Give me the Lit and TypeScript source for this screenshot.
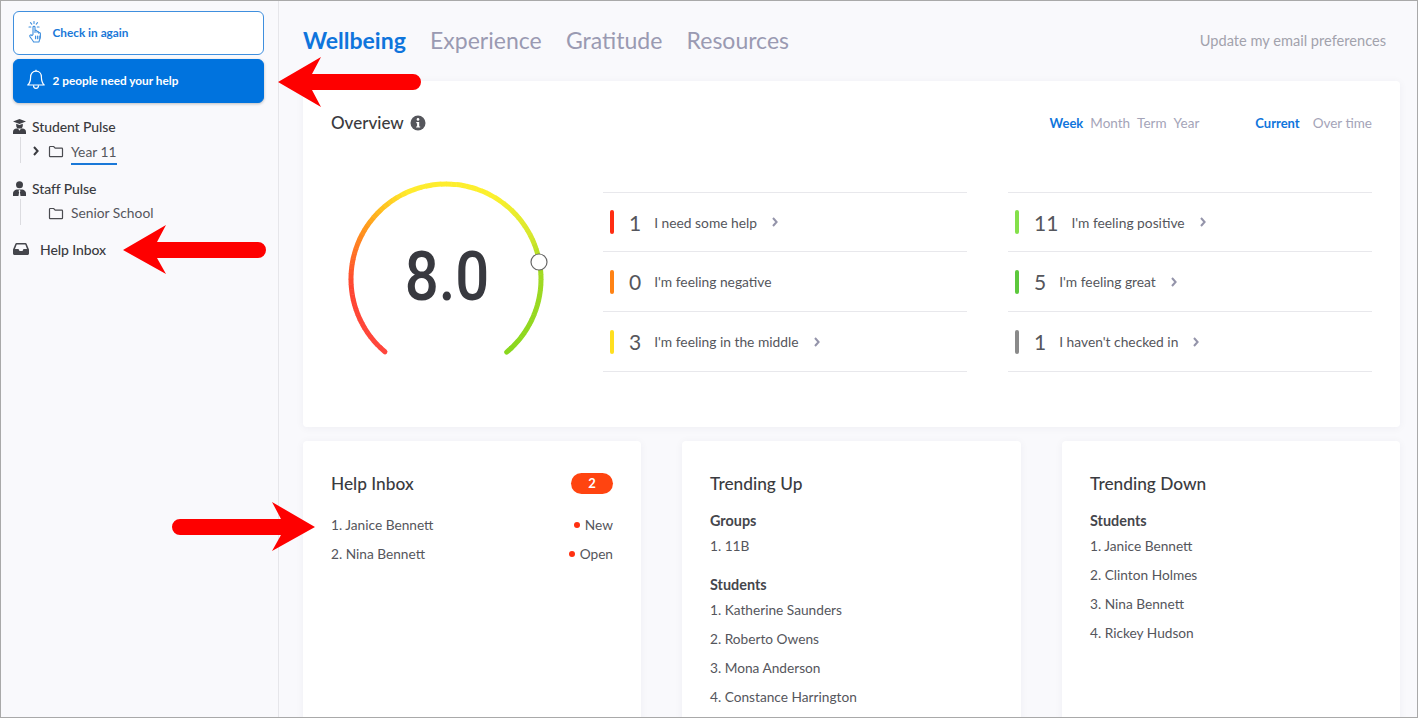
import { LitElement, html, css, svg } from 'lit';
import { customElement } from 'lit/decorators.js';

// gradient stops along the gauge, 0 = lower left end, 1 = lower right end
const GAUGE_STOPS: [number, number[]][] = [
  [0, [255, 70, 60]],
  [0.16, [255, 70, 50]],
  [0.27, [255, 140, 30]],
  [0.34, [255, 190, 30]],
  [0.41, [255, 235, 45]],
  [0.6, [252, 240, 45]],
  [0.72, [215, 232, 45]],
  [0.78, [165, 218, 35]],
  [1, [135, 215, 30]],
];

function gaugeColor(t: number) {
  for (let i = 1; i < GAUGE_STOPS.length; i++) {
    const [t0, c0] = GAUGE_STOPS[i - 1];
    const [t1, c1] = GAUGE_STOPS[i];
    if (t <= t1) {
      const k = (t - t0) / (t1 - t0);
      const c = c0.map((v, n) => Math.round(v + (c1[n] - v) * k));
      return `rgb(${c.join(',')})`;
    }
  }
  return 'rgb(135,215,30)';
}

function gaugeSegments() {
  const cx = 100;
  const cy = 100;
  const r = 95;
  const start = 220;
  const sweep = 280;
  const steps = 90;
  const point = (deg: number) => {
    const a = ((deg - 90) * Math.PI) / 180;
    return [cx + r * Math.cos(a), cy + r * Math.sin(a)];
  };
  const parts = [];
  for (let i = 0; i < steps; i++) {
    const [x0, y0] = point(start + (sweep * i) / steps);
    const [x1, y1] = point(start + (sweep * (i + 1)) / steps + 0.3);
    parts.push(svg`<path d="M${x0} ${y0}A${r} ${r} 0 0 1 ${x1} ${y1}" stroke=${gaugeColor(i / steps)} stroke-width="5" fill="none" stroke-linecap=${i === 0 || i === steps - 1 ? 'round' : 'butt'}/>`);
  }
  return parts;
}

const chevron = html`<svg class="chev" viewBox="0 0 8 10"><path d="M2 1l3.600 4L2 9" fill="none" stroke="currentColor" stroke-width="2"/></svg>`;

const folder = html`<svg class="folder" viewBox="0 0 16 13"><path d="M1.500 11V2.200c0-.5.3-.7.7-.7h3.500l1.500 1.700h6.600c.4 0 .7.3.7.7V11c0 .4-.3.7-.7.7H2.200c-.4 0-.7-.3-.7-.7z" fill="none" stroke="#4a4b50" stroke-width="1.200"/></svg>`;

type Row = { n: number; label: string; color: string; more: boolean };

const LEFT: Row[] = [
  { n: 1, label: 'I need some help', color: '#ff2d12', more: true },
  { n: 0, label: "I'm feeling negative", color: '#ff8214', more: false },
  { n: 3, label: "I'm feeling in the middle", color: '#ffdf20', more: true },
];
const RIGHT: Row[] = [
  { n: 11, label: "I'm feeling positive", color: '#84e04a', more: true },
  { n: 5, label: "I'm feeling great", color: '#5cc83c', more: true },
  { n: 1, label: "I haven't checked in", color: '#8a8a8a', more: true },
];

@customElement('app-root')
export class AppRoot extends LitElement {
  static styles = css`
    :host {
      display: block;
      position: relative;
      width: 1418px;
      height: 718px;
      overflow: hidden;
      box-sizing: border-box;
      border: 1px solid #a9a9a9;
      background: #f9f9fc;
      font-family: Lato, 'Open Sans', sans-serif;
      color: #45464c;
      font-size: 14px;
    }
    .page {
      display: flex;
      height: 100%;
    }
    .side {
      width: 278px;
      flex: none;
      box-sizing: border-box;
      border-right: 1px solid #e6e6ea;
      padding: 10px 14px 0 12px;
    }
    .btn {
      height: 44px;
      box-sizing: border-box;
      border-radius: 6px;
      display: flex;
      align-items: center;
      font-size: 11.800px;
      font-weight: 700;
      border: 1.500px solid #3f8fde;
      background: #fff;
      color: #1a78d8;
      padding: 0 0 2px 13.500px;
      gap: 9px;
    }
    .btn svg {
      width: 16px;
      height: 22px;
      flex: none;
    }
    .btn.solid {
      margin-top: 4px;
      background: #0073de;
      border-color: #0073de;
      color: #fff;
      box-shadow: 0 1px 3px rgba(0, 0, 0, 0.25);
      padding-left: 12.500px;
      gap: 8px;
    }
    .btn.solid svg {
      width: 18px;
    }
    .group {
      display: flex;
      align-items: center;
      gap: 6px;
      height: 20px;
      font-size: 14px;
      letter-spacing: -0.1px;
      font-weight: 500;
      color: #3a3b40;
    }
    .group svg {
      width: 13px;
      height: 15px;
      flex: none;
    }
    .pulse {
      margin-top: 13px;
    }
    .pulse + .pulse {
      margin-top: 15px;
    }
    .tree {
      margin-left: 7px;
      border-left: 1px solid #dcdce0;
      height: 26px;
      box-sizing: border-box;
      padding-top: 2px;
      margin-top: 1px;
      display: flex;
      align-items: center;
      font-size: 13.800px;
      color: #55565c;
    }
    .tree .chev {
      width: 8px;
      height: 10px;
      margin-left: 11px;
      color: #3a3b40;
      flex: none;
    }
    .tree .folder {
      width: 16px;
      height: 13px;
      margin-left: 8px;
      flex: none;
    }
    .tree .indent {
      width: 8px;
      margin-left: 11px;
      flex: none;
    }
    .tree .name {
      margin-left: 7px;
      padding-bottom: 2px;
    }
    .tree .name.on {
      border-bottom: 2px solid #1a78d8;
      margin-top: 6px;
      padding-bottom: 3px;
    }
    .inbox-link {
      margin-top: 14px;
      display: flex;
      align-items: center;
      gap: 11px;
      font-size: 14px;
      letter-spacing: -0.1px;
      font-weight: 500;
      color: #3a3b40;
      height: 20px;
    }
    .inbox-link svg {
      width: 16px;
      height: 12px;
      flex: none;
    }
    .main {
      flex: 1;
      min-width: 0;
      padding: 0 17px 0 24px;
    }
    .top {
      height: 80px;
      box-sizing: border-box;
      padding: 0 14px 0 0;
      display: flex;
      align-items: center;
      justify-content: space-between;
    }
    .tabs {
      display: flex;
      gap: 24.300px;
      font-size: 23px;
      color: #9a9ab2;
      margin-top: -3px;
    }
    .tabs .on {
      color: #0f75dc;
      font-weight: 700;
    }
    .email {
      font-size: 14.600px;
      color: #a2a2ac;
      margin-top: -2px;
    }
    .card {
      background: #fff;
      border-radius: 4px;
      box-shadow: 0 1px 8px rgba(40, 40, 80, 0.05);
      box-sizing: border-box;
    }
    .overview {
      height: 346px;
      padding: 30px 28px 0;
    }
    .ov-head {
      display: flex;
      align-items: center;
      height: 24px;
    }
    .ov-head h2 {
      margin: -1px 0 0;
      font-size: 17px;
      font-weight: 500;
      color: #3a3b40;
    }
    .ov-head .info {
      width: 16px;
      height: 16px;
      margin-left: 6px;
    }
    .filters {
      margin-left: auto;
      display: flex;
      gap: 7px;
      font-size: 13.500px;
      color: #a4a4b8;
    }
    .filters .on {
      color: #0f75dc;
      font-weight: 700;
      font-size: 13px;
    }
    .filters.views {
      margin-left: 56px;
      gap: 13px;
    }
    .ov-body {
      display: flex;
      margin-top: 44px;
    }
    .gauge {
      position: relative;
      width: 200px;
      height: 200px;
      margin: 0 57px 0 15px;
      flex: none;
    }
    .gauge svg {
      width: 200px;
      height: 200px;
      overflow: visible;
      display: block;
    }
    .gauge .value {
      position: absolute;
      inset: 0 0 4px 2px;
      display: flex;
      align-items: center;
      justify-content: center;
      font-family: Roboto, sans-serif;
      font-size: 68px;
      color: #38393f;
      font-weight: 500;
      line-height: 1;
      transform: scaleX(0.88);
    }
    .cols {
      display: grid;
      grid-template-columns: 364px 364px;
      gap: 41px;
      height: 180px;
      margin-top: 13px;
    }
    .row {
      height: 60px;
      box-sizing: border-box;
      display: flex;
      align-items: center;
      border-top: 1px solid #e8e8ec;
    }
    .row:first-child {
      height: 59px;
    }
    .col {
      border-bottom: 1px solid #e8e8ec;
    }
    .row .bar {
      width: 4px;
      height: 24px;
      border-radius: 2px;
      margin-left: 7px;
      flex: none;
    }
    .row .n {
      margin-left: 15px;
      padding-right: 13px;
      font-size: 21px;
      color: #55565c;
      flex: none;
    }
    .row .label {
      font-size: 13.800px;
      color: #55565c;
    }
    .row .chev {
      width: 8px;
      height: 10px;
      margin-left: 14px;
      color: #9494aa;
    }
    .cards {
      display: grid;
      grid-template-columns: 338px 339px 338px;
      gap: 41px;
      margin-top: 14px;
    }
    .small {
      height: 300px;
      padding: 30px 28px 0;
    }
    .small h3 {
      margin: 0 0 16px;
      font-size: 17.300px;
      font-weight: 500;
      color: #3a3b40;
      height: 24px;
      line-height: 26px;
    }
    .small-head {
      display: flex;
      justify-content: space-between;
      align-items: center;
    }
    .small-head h3 {
      margin: 0;
    }
    .count {
      width: 42px;
      height: 21px;
      border-radius: 11px;
      background: #ff4410;
      color: #fff;
      font-size: 13px;
      font-weight: 700;
      display: flex;
      align-items: center;
      justify-content: center;
    }
    .inbox-list {
      margin-top: 15px;
    }
    .inbox-list div {
      display: flex;
      align-items: center;
      height: 29px;
      font-size: 13.700px;
      color: #55565c;
    }
    .inbox-list .dot {
      width: 6px;
      height: 6px;
      border-radius: 50%;
      background: #ff3010;
      margin-left: auto;
      margin-right: 5px;
    }
    .sub {
      font-size: 14.400px;
      font-weight: 700;
      color: #45464c;
      height: 20px;
      line-height: 20px;
    }
    .names {
      margin-bottom: 15px;
    }
    .names div {
      height: 29px;
      line-height: 29px;
      font-size: 13.700px;
      color: #55565c;
    }
    .arrows {
      position: absolute;
      left: -1px;
      top: -1px;
      width: 1418px;
      height: 718px;
      pointer-events: none;
    }
  `;

  private renderRow(r: Row) {
    return html`<div class="row">
      <span class="bar" style="background:${r.color}"></span>
      <span class="n">${r.n}</span>
      <span class="label">${r.label}</span>
      ${r.more ? chevron : ''}
    </div>`;
  }

  private renderSide() {
    return html`<aside class="side">
      <div class="btn">
        <svg viewBox="0 0 16 22" fill="none" stroke="#3f8fde" stroke-width="1.100" stroke-linecap="round" stroke-linejoin="round">
          <path d="M6 .5v2M2.500 1.700l1.200 1.500M9.500 1.700L8.300 3.200M1 6h1.800M9.300 6h1.800"/>
          <path d="M5 13.500V6.200c0-1.200 2-1.200 2 0v5.300l.1-1.500c0-1.100 1.800-1.100 1.800 0l.1 1.300c0-1 1.700-1 1.700.1v.9c.1-.9 1.700-.9 1.700.2v3.700c0 1.200-.5 2-1 3l-.4 1.800H5.600c-.6-1.400-1.800-2.800-3.400-4.900-1.400-1.800.7-3 1.800-1.500z"/>
          <path d="M7.500 15v2.800M9.400 15v2.800M11.200 15v2.800"/>
        </svg>
        Check in again
      </div>
      <div class="btn solid">
        <svg viewBox="0 0 18 22" fill="none" stroke="#fff" stroke-width="1.200" stroke-linejoin="round">
          <path d="M9 2.200c-3.400 0-5.400 2.600-5.400 5.800 0 4.600-.9 6.300-2.800 8h16.400c-1.900-1.700-2.800-3.400-2.800-8 0-3.200-2-5.800-5.400-5.800z"/>
          <path d="M6.500 16.200c0 4.200 5 4.200 5 0M9 .8v1.400"/>
        </svg>
        2 people need your help
      </div>
      <div class="pulse">
        <div class="group">
          <svg viewBox="0 0 13 15" fill="#3f4046"><path d="M0 2.500L6.500 0 13 2.500 6.500 5zM3.200 4.700l3.300 1.300 3.300-1.300v1.800c0 2-1.500 3.500-3.300 3.500S3.200 8.500 3.200 6.500z"/><path d="M0 15v-2C0 11 1.500 9.800 3.500 9.600h6C11.500 9.800 13 11 13 13v2z"/><path d="M5 9.600l1.500 2.200 1.500-2.200z" fill="#f9f9fc"/></svg>
          Student Pulse
        </div>
        <div class="tree">${chevron}${folder}<span class="name on">Year 11</span></div>
      </div>
      <div class="pulse">
        <div class="group">
          <svg viewBox="0 0 13 15" fill="#3f4046"><circle cx="6.500" cy="3.800" r="3.500"/><path d="M0 15v-2.500C0 10.500 1.500 9 3.500 8.500h6C11.500 9 13 10.500 13 12.500V15z"/><path d="M6.500 8.800l-1.100 1.300.7 1-.6 3.900h2l-.6-3.900.7-1z" fill="#f9f9fc"/></svg>
          Staff Pulse
        </div>
        <div class="tree"><span class="indent"></span>${folder}<span class="name">Senior School</span></div>
      </div>
      <div class="inbox-link">
        <svg viewBox="0 0 16 12" fill="#45464c"><path d="M3.500 0h9c.5 0 .9.200 1.100.7L16 6.500V10.500c0 .8-.7 1.500-1.500 1.500h-13C.7 12 0 11.300 0 10.500V6.500L2.400.7C2.600.200 3 0 3.500 0zM3.700 1.500L2 6h3.500l1 2h3l1-2H14l-1.700-4.500z" fill-rule="evenodd"/></svg>
        Help Inbox
      </div>
    </aside>`;
  }

  private renderOverview() {
    return html`<section class="card overview">
      <div class="ov-head">
        <h2>Overview</h2>
        <svg class="info" viewBox="0 0 16 16"><circle cx="8" cy="8" r="7.500" fill="#55565c"/><circle cx="8" cy="4.400" r="1.300" fill="#fff"/><path d="M6.300 7h2.900v4.400h1v1.200H6.100v-1.200h1V8.200h-.8z" fill="#fff"/></svg>
        <div class="filters"><span class="on">Week</span><span>Month</span><span>Term</span><span>Year</span></div>
        <div class="filters views"><span class="on">Current</span><span>Over time</span></div>
      </div>
      <div class="ov-body">
        <div class="gauge">
          <svg viewBox="0 0 200 200">
            ${gaugeSegments()}
            <circle cx="193" cy="83" r="8" fill="#fff" stroke="#666" stroke-width="1.200"/>
          </svg>
          <div class="value">8.0</div>
        </div>
        <div class="cols">
          <div class="col">${LEFT.map(r => this.renderRow(r))}</div>
          <div class="col">${RIGHT.map(r => this.renderRow(r))}</div>
        </div>
      </div>
    </section>`;
  }

  private renderCards() {
    return html`<div class="cards">
      <section class="card small">
        <div class="small-head"><h3>Help Inbox</h3><span class="count">2</span></div>
        <div class="inbox-list">
          <div>1. Janice Bennett<span class="dot"></span>New</div>
          <div>2. Nina Bennett<span class="dot"></span>Open</div>
        </div>
      </section>
      <section class="card small">
        <h3>Trending Up</h3>
        <div class="sub">Groups</div>
        <div class="names"><div>1. 11B</div></div>
        <div class="sub">Students</div>
        <div class="names">
          <div>1. Katherine Saunders</div>
          <div>2. Roberto Owens</div>
          <div>3. Mona Anderson</div>
          <div>4. Constance Harrington</div>
        </div>
      </section>
      <section class="card small">
        <h3>Trending Down</h3>
        <div class="sub">Students</div>
        <div class="names">
          <div>1. Janice Bennett</div>
          <div>2. Clinton Holmes</div>
          <div>3. Nina Bennett</div>
          <div>4. Rickey Hudson</div>
        </div>
      </section>
    </div>`;
  }

  render() {
    return html`
      <div class="page">
        ${this.renderSide()}
        <main class="main">
          <header class="top">
            <nav class="tabs"><span class="on">Wellbeing</span><span>Experience</span><span>Gratitude</span><span>Resources</span></nav>
            <span class="email">Update my email preferences</span>
          </header>
          ${this.renderOverview()}
          ${this.renderCards()}
        </main>
      </div>
      <svg class="arrows" viewBox="0 0 1418 718" fill="#fe0000">
        <path d="M278 82L321 57L312 74H413a8 8 0 0 1 0 16H312L321 107z"/>
        <path d="M123 250L166 225L157 242H258a8 8 0 0 1 0 16H157L166 274z"/>
        <path d="M315 527L272 502L281 519H180a8 8 0 0 0 0 16H281L272 551z"/>
      </svg>
    `;
  }
}
